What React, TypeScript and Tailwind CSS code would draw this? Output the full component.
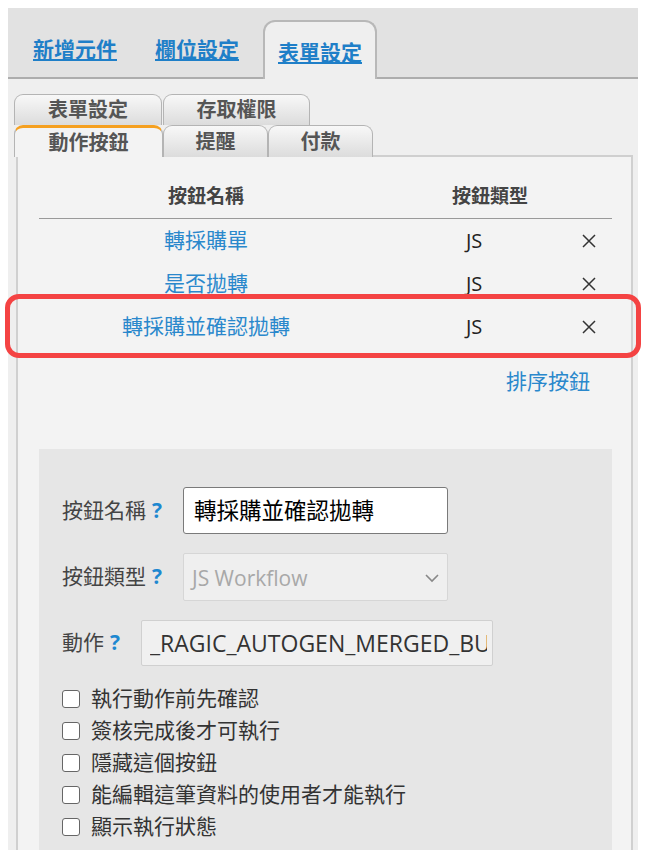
import React from "react";

const font = "font-['Open_Sans','Noto_Sans_CJK_TC',sans-serif]";

const rows = ["轉採購單", "是否拋轉", "轉採購並確認拋轉"];

const options = [
  "執行動作前先確認",
  "簽核完成後才可執行",
  "隱藏這個按鈕",
  "能編輯這筆資料的使用者才能執行",
  "顯示執行狀態",
];

function Cross() {
  return (
    <svg width="14" height="14" viewBox="0 0 14 14">
      <path d="M1 1 L13 13 M13 1 L1 13" stroke="#333" strokeWidth="1.5" fill="none" />
    </svg>
  );
}

function SubTab({ label, w, active }: { label: string; w: string; active?: boolean }) {
  return (
    <div
      className={`${w} h-full flex items-center justify-center rounded-t-[9px] border border-b-0 border-[#b4b4b4] text-[20px] font-bold text-[#555] ${
        active
          ? "bg-[#f3f3f3] border-t-[3px] border-t-[#f5a020]"
          : "bg-gradient-to-b from-[#f8f8f8] to-[#dcdcdc]"
      }`}
    >
      {label}
    </div>
  );
}

function Help() {
  return <span className="ml-[6px] text-[#1e88d0] font-bold">?</span>;
}

export default function App() {
  return (
    <div className={`w-[650px] h-[850px] bg-white pt-[8px] pl-[8px] relative overflow-hidden ${font}`}>
      <div className="w-[630px] h-[842px] bg-[#efefef] flex flex-col">
        {/* top tabs */}
        <div className="h-[71px] shrink-0 bg-[#e2e2e2] border-b-2 border-[#adadad] flex items-end">
          <a className="ml-[25px] mb-[14px] text-[21px] leading-[28px] font-bold text-[#1f7fc8] underline">新增元件</a>
          <a className="ml-[38px] mb-[14px] text-[21px] leading-[28px] font-bold text-[#1f7fc8] underline">欄位設定</a>
          <div className="ml-[24px] -mb-[2px] h-[59px] px-[13px] pt-[16px] bg-[#efefef] border-2 border-b-0 border-[#b8b8b8] rounded-t-[12px]">
            <a className="text-[21px] leading-[28px] font-bold text-[#1f7fc8] underline">表單設定</a>
          </div>
        </div>

        {/* sub tabs */}
        <div className="pt-[15px] pl-[6px]">
          <div className="flex h-[31px] gap-[1px]">
            <SubTab label="表單設定" w="w-[148px]" />
            <SubTab label="存取權限" w="w-[147px]" />
          </div>
          <div className="flex h-[32px]">
            <SubTab label="動作按鈕" w="w-[149px]" active />
            <SubTab label="提醒" w="w-[105px]" />
            <SubTab label="付款" w="w-[105px]" />
            <div className="w-[260px] border-b-2 border-[#cfcfcf]" />
          </div>
        </div>

        {/* panel */}
        <div className="ml-[8px] w-[617px] flex-1 bg-[#f3f3f3] border-x-2 border-[#d0d0d0] pl-[21px] pr-[19px]">
          <div className="h-[62px] pt-[18px] grid grid-cols-[334px_193px_46px] items-center border-b border-[#999] text-[19px] font-bold text-[#444]">
            <div className="text-center">按鈕名稱</div>
            <div className="pl-[79px]">按鈕類型</div>
            <div />
          </div>
          {rows.map((r) => (
            <div key={r} className="h-[43px] grid grid-cols-[334px_193px_46px] items-center text-[21px]">
              <div className="text-center text-[#2a88cc]">{r}</div>
              <div className="pl-[93px] text-[20px] text-[#222]">JS</div>
              <div className="flex justify-center">
                <Cross />
              </div>
            </div>
          ))}
          <div className="mt-[19px] h-[28px] text-right pr-[22px] text-[21px] leading-[28px] text-[#2a88cc]">排序按鈕</div>

          {/* form */}
          <div className="mt-[54px] bg-[#e6e6e6] pt-[38px] pl-[23px] pb-[20px] text-[21px] text-[#444]">
            <div className="flex items-center h-[47px]">
              <div className="w-[121px] whitespace-nowrap">
                按鈕名稱
                <Help />
              </div>
              <div className="w-[265px] h-[47px] bg-white border border-[#7a7a7a] rounded-[3px] pl-[10px] flex items-center text-[22.5px] text-black">
                轉採購並確認拋轉
              </div>
            </div>
            <div className="flex items-center h-[48px] mt-[19px]">
              <div className="w-[121px] whitespace-nowrap">
                按鈕類型
                <Help />
              </div>
              <div className="w-[265px] h-[48px] pt-[3px] bg-[#efefef] border border-[#d6d6d6] rounded-[2px] pl-[8px] pr-[8px] flex items-center justify-between text-[21px] text-[#a8a8a8]">
                <span>JS Workflow</span>
                <svg width="14" height="9" viewBox="0 0 14 9">
                  <path d="M1 1 L7 7 L13 1" stroke="#888" strokeWidth="1.6" fill="none" />
                </svg>
              </div>
            </div>
            <div className="flex items-center h-[46px] mt-[19px]">
              <div className="w-[79px] whitespace-nowrap">
                動作
                <Help />
              </div>
              <div className="w-[352px] h-[46px] bg-[#f0f0f0] border border-[#d0d0d0] rounded-[2px] pl-[8px] pr-[5px] flex items-center">
                <div className="overflow-hidden whitespace-nowrap text-[23px] text-[#333]">_RAGIC_AUTOGEN_MERGED_BUTTON</div>
              </div>
            </div>
            <div className="mt-[17px]">
              {options.map((o) => (
                <div key={o} className="h-[32px] flex items-center">
                  <div className="w-[18px] h-[18px] bg-white border-[1.5px] border-[#666] rounded-[3px]" />
                  <span className="ml-[11px] text-[#333]">{o}</span>
                </div>
              ))}
            </div>
          </div>
        </div>
      </div>

      {/* highlight annotation */}
      <div className="absolute left-[5px] top-[294px] w-[636px] h-[64px] border-[5px] border-[#f44343] rounded-[14px]" />
    </div>
  );
}
